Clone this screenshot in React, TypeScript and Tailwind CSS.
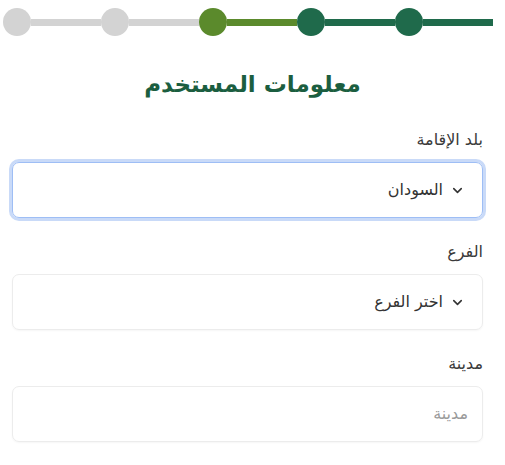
import { ChevronDown } from 'lucide-react'

const steps = [
  { color: 'bg-[#d3d3d3]' },
  { color: 'bg-[#d3d3d3]' },
  { color: 'bg-[#5b8a2c]' },
  { color: 'bg-[#1f6a4b]' },
  { color: 'bg-[#1f6a4b]' },
]

export default function App() {
  return (
    <div className="w-[505px] h-[465px] overflow-hidden bg-white font-['DejaVu_Sans',sans-serif]">
      {/* Stepper */}
      <div className="flex pt-[8px] pl-[3px]" dir="ltr">
        {steps.map((s, i) => (
          <div key={i} className="flex items-center w-[98px]">
            <div className={`w-7 h-7 rounded-full shrink-0 ${s.color}`}></div>
            <div className={`flex-1 h-[7px] ${s.color}`}></div>
          </div>
        ))}
      </div>

      {/* Title */}
      <h1 className="mt-[30px] text-center text-[23px] leading-[36px] font-bold text-[#1b5e40]" dir="rtl">
        معلومات المستخدم
      </h1>

      {/* Form */}
      <div className="pl-[12px] pr-[22px] mt-[28px]" dir="rtl">
        <label className="block text-[16px] leading-5 text-[#3a3a3a]">بلد الإقامة</label>
        <div className="mt-[12px] h-[56px] flex items-center pl-[16px] pr-[17px] gap-[7px] rounded-[7px] border border-[#9ebef5] ring-[3px] ring-[#c9daf8] text-[16px] text-[#333]">
          <ChevronDown className="w-[15px] h-[15px] text-[#333]" strokeWidth={2.5} />
          <span>السودان</span>
        </div>

        <label className="block mt-[24px] text-[16px] leading-5 text-[#3a3a3a]">الفرع</label>
        <div className="mt-[12px] h-[56px] flex items-center pl-[16px] pr-[17px] gap-[7px] rounded-[7px] border border-[#ececec] shadow-[0_1px_2px_rgba(0,0,0,0.04)] text-[16px] text-[#333]">
          <ChevronDown className="w-[15px] h-[15px] text-[#333]" strokeWidth={2.5} />
          <span>اختر الفرع</span>
        </div>

        <label className="block mt-[24px] text-[16px] leading-5 text-[#3a3a3a]">مدينة</label>
        <div className="mt-[12px] h-[56px] flex items-center px-[14px] rounded-[7px] border border-[#ececec] shadow-[0_1px_2px_rgba(0,0,0,0.04)] text-[16px] text-[#9a9a9a]">
          <span>مدينة</span>
        </div>
      </div>
    </div>
  )
}
